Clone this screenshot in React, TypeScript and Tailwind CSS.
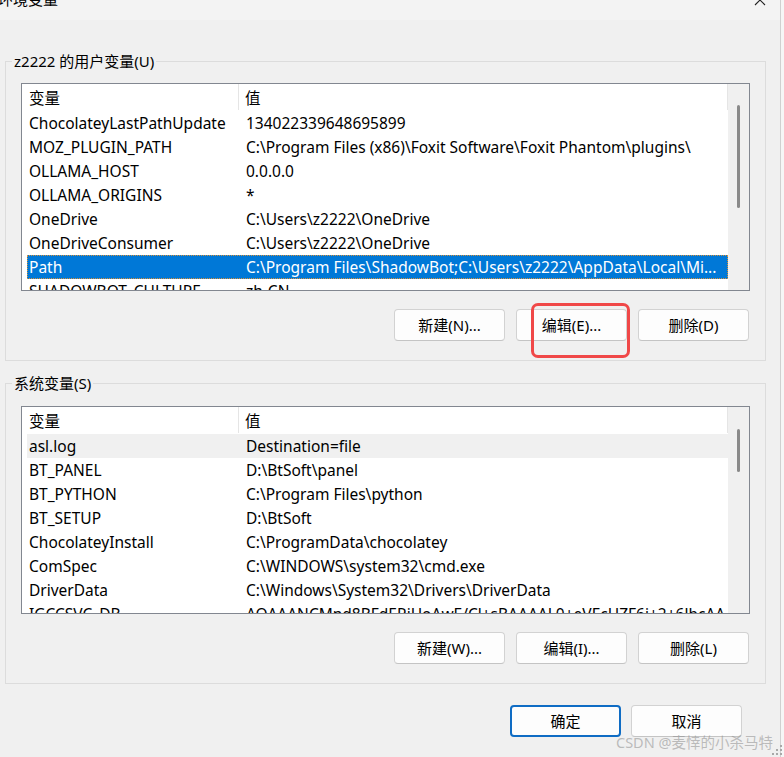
import React from 'react';

const font = "font-['Noto_Sans','Noto_Sans_CJK_SC',sans-serif]";

type Row = { name: string; value: string };

const userRows: Row[] = [
  { name: 'ChocolateyLastPathUpdate', value: '134022339648695899' },
  { name: 'MOZ_PLUGIN_PATH', value: 'C:\\Program Files (x86)\\Foxit Software\\Foxit Phantom\\plugins\\' },
  { name: 'OLLAMA_HOST', value: '0.0.0.0' },
  { name: 'OLLAMA_ORIGINS', value: '*' },
  { name: 'OneDrive', value: 'C:\\Users\\z2222\\OneDrive' },
  { name: 'OneDriveConsumer', value: 'C:\\Users\\z2222\\OneDrive' },
  { name: 'Path', value: 'C:\\Program Files\\ShadowBot;C:\\Users\\z2222\\AppData\\Local\\Mi...' },
  { name: 'SHADOWBOT_CULTURE', value: 'zh-CN' },
];

const systemRows: Row[] = [
  { name: 'asl.log', value: 'Destination=file' },
  { name: 'BT_PANEL', value: 'D:\\BtSoft\\panel' },
  { name: 'BT_PYTHON', value: 'C:\\Program Files\\python' },
  { name: 'BT_SETUP', value: 'D:\\BtSoft' },
  { name: 'ChocolateyInstall', value: 'C:\\ProgramData\\chocolatey' },
  { name: 'ComSpec', value: 'C:\\WINDOWS\\system32\\cmd.exe' },
  { name: 'DriverData', value: 'C:\\Windows\\System32\\Drivers\\DriverData' },
  { name: 'IGCCSVC_DB', value: 'AQAAANCMnd8BFdERjHoAwE/Cl+sBAAAAL0+eVEcHZF6j+2+6lbcAAAA' },
];

function WinButton({ label, primary }: { label: string; primary?: boolean }) {
  return (
    <button
      className={
        primary
          ? 'w-[111px] h-[32px] rounded-[4px] border-2 border-[#0f6cc4] bg-[#fdfdfd] text-[15px] text-black'
          : 'w-[111px] h-[32px] rounded-[4px] border border-[#d2d2d2] border-b-[#c4c4c4] bg-[#fdfdfd] text-[15px] text-black'
      }
    >
      {label}
    </button>
  );
}

function VarList({ rows, selected, hovered, thumbTop, thumbHeight }: {
  rows: Row[];
  selected?: number;
  hovered?: number;
  thumbTop: string;
  thumbHeight: string;
}) {
  return (
    <div className="h-[208px] w-full border border-[#828790] bg-white flex">
      <div className="flex-1 min-w-0 flex flex-col overflow-hidden">
        <div className="h-[27px] flex shrink-0 text-[15.5px] leading-[25px]">
          <div className="w-[217px] pl-[7px] pt-[2px] border-r border-[#e5e5e5] mb-[1px]">变量</div>
          <div className="flex-1 pl-[6px] pt-[2px] border-r border-[#e5e5e5] mb-[1px]">值</div>
        </div>
        <div className="pl-[5px] flex flex-col">
          {rows.map((r, i) => {
            const isSel = i === selected;
            const isHover = i === hovered;
            return (
              <div
                key={r.name}
                className={
                  isSel
                    ? 'h-[24px] shrink-0 flex text-[15.5px] leading-[22px] bg-[#0078d7] text-white border border-dotted border-[#d9913a]'
                    : isHover
                    ? 'h-[24px] shrink-0 flex text-[15.5px] leading-[22px] bg-[#f0f0f0] text-black border border-transparent'
                    : 'h-[24px] shrink-0 flex text-[15.5px] leading-[22px] text-black border border-transparent'
                }
              >
                <div className="w-[218px] shrink-0 pl-[1px] whitespace-nowrap overflow-hidden">{r.name}</div>
                <div className="flex-1 min-w-0 whitespace-nowrap overflow-hidden">{r.value}</div>
              </div>
            );
          })}
        </div>
      </div>
      <div className="w-[21px] bg-[#f0f0f0] flex justify-center shrink-0">
        <div className={`w-[3px] rounded-full bg-[#8a8a8a] ${thumbTop} ${thumbHeight}`} />
      </div>
    </div>
  );
}

function GroupBox({ title, className, children }: { title: string; className: string; children: React.ReactNode }) {
  return (
    <fieldset className={`ml-[5px] w-[761px] min-w-0 border border-[#dcdcdc] pl-[6px] pr-[15px] pb-[19px] ${className}`}>
      <legend className="px-[2px] text-[15px] leading-[20px] text-black">{title}</legend>
      <div className="pl-[9px]">{children}</div>
    </fieldset>
  );
}

export default function App() {
  return (
    <div className={`relative w-[784px] h-[757px] overflow-hidden bg-[#f0f0f0] flex ${font}`}>
      <div className="w-[781px] flex flex-col border-r border-[#d0d0d0]">
        <div className="h-[20px] shrink-0 bg-[#f3f3f3] flex justify-between overflow-hidden">
          <div className="ml-[-2px] mt-[-11px] text-[15px] leading-[20px] text-black">环境变量</div>
          <svg className="mr-[14px] mt-[-6px]" width="12" height="12" viewBox="0 0 12 12">
            <path d="M1 1 L11 11 M11 1 L1 11" stroke="#222" strokeWidth="1.1" fill="none" />
          </svg>
        </div>

        <GroupBox title="z2222 的用户变量(U)" className="mt-[31px]">
          <div className="mt-[12px]">
            <VarList rows={userRows} selected={6} thumbTop="mt-[21px]" thumbHeight="h-[103px]" />
          </div>
          <div className="mt-[18px] pr-[1px] flex justify-end gap-[11px]">
            <WinButton label="新建(N)..." />
            <WinButton label="编辑(E)..." />
            <WinButton label="删除(D)" />
          </div>
        </GroupBox>

        <GroupBox title="系统变量(S)" className="mt-[12px]">
          <div className="mt-[13px]">
            <VarList rows={systemRows} hovered={0} thumbTop="mt-[22px]" thumbHeight="h-[43px]" />
          </div>
          <div className="mt-[18px] pr-[1px] flex justify-end gap-[11px]">
            <WinButton label="新建(W)..." />
            <WinButton label="编辑(I)..." />
            <WinButton label="删除(L)" />
          </div>
        </GroupBox>

        <div className="mt-[21px] flex justify-end gap-[10px] pr-[38px]">
          <WinButton label="确定" primary />
          <WinButton label="取消" />
        </div>
      </div>
      <div className="flex-1 bg-[#f6f6f6]" />

      {/* annotation box */}
      <div className="absolute left-[531px] top-[303px] w-[99px] h-[55px] border-[3px] border-[#f04848] rounded-[7px]" />

      {/* watermark */}
      <div className="absolute left-[616px] top-[732px] text-[14.5px] leading-[20px] text-[rgba(140,140,140,0.55)] whitespace-nowrap">
        CSDN @麦悻的小杀马特
      </div>

      {/* resize grip */}
      <svg className="absolute right-[1px] bottom-[1px]" width="11" height="11" viewBox="0 0 11 11">
        <rect x="8" y="0" width="2" height="2" fill="#a8a8a8" />
        <rect x="4" y="4" width="2" height="2" fill="#a8a8a8" />
        <rect x="8" y="4" width="2" height="2" fill="#a8a8a8" />
        <rect x="0" y="8" width="2" height="2" fill="#a8a8a8" />
        <rect x="4" y="8" width="2" height="2" fill="#a8a8a8" />
        <rect x="8" y="8" width="2" height="2" fill="#a8a8a8" />
      </svg>
    </div>
  );
}
